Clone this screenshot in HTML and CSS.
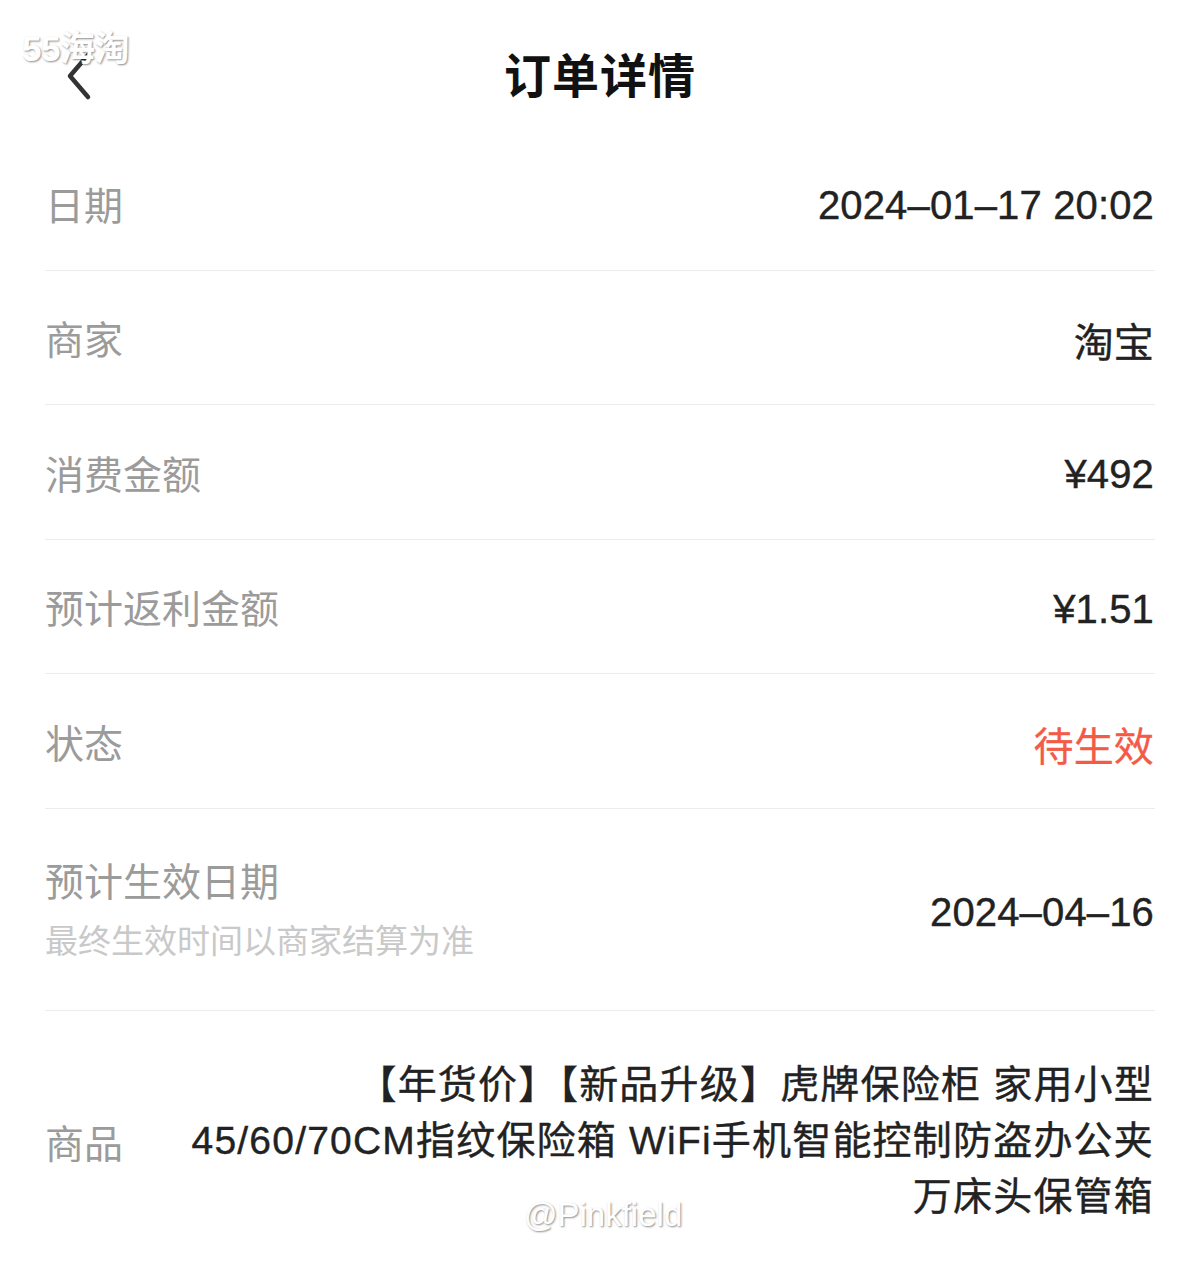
FILE: index.html
```html
<!DOCTYPE html>
<html lang="zh-CN">

<head>
  <meta charset="utf-8">
  <title>订单详情</title>
  <link rel="stylesheet" href="styles.css">
</head>

<body>
  <div class="page">
    <div class="mark-top">55海淘</div>

    <header class="nav">
      <button class="back" aria-label="返回">
        <svg width="30" height="50" viewBox="0 0 30 50">
          <path d="M23 4 L5 25 L23 46" fill="none" stroke="#333" stroke-width="4.5" stroke-linecap="round" stroke-linejoin="round"/>
        </svg>
      </button>
      <h1 class="title">订单详情</h1>
      <span></span>
    </header>

    <div class="list">
      <div class="row">
        <span class="label">日期</span>
        <span class="value">2024–01–17 20:02</span>
      </div>
      <div class="row">
        <span class="label">商家</span>
        <span class="value">淘宝</span>
      </div>
      <div class="row">
        <span class="label">消费金额</span>
        <span class="value">¥492</span>
      </div>
      <div class="row">
        <span class="label">预计返利金额</span>
        <span class="value">¥1.51</span>
      </div>
      <div class="row">
        <span class="label">状态</span>
        <span class="value pending">待生效</span>
      </div>
      <div class="row row-tall">
        <div class="label-group">
          <span class="label">预计生效日期</span>
          <span class="hint">最终生效时间以商家结算为准</span>
        </div>
        <span class="value">2024–04–16</span>
      </div>
      <div class="row row-goods">
        <span class="label">商品</span>
        <span class="value goods">【年货价】【新品升级】虎牌保险柜 家用小型45/60/70CM指纹保险箱 WiFi手机智能控制防盗办公夹万床头保管箱</span>
      </div>
    </div>

    <div class="mark-bottom">@Pinkfield</div>
  </div>
</body>

</html>
```

FILE: styles.css
```css
body {
  margin: 0;
  background: #fff;
  font-family: "Liberation Sans", "Noto Sans CJK SC", sans-serif;
  color: #222;
}

.page {
  position: relative;
  min-height: 1265px;
  overflow: hidden;
}

.nav {
  display: grid;
  grid-template-columns: 1fr auto 1fr;
  align-items: center;
  height: 136px;
  padding: 0 45px;
  box-sizing: border-box;
}

.back {
  justify-self: start;
  background: none;
  border: 0;
  padding: 0;
  margin: 16px 0 0 20px;
  line-height: 0;
}

.title {
  margin: 8px 0 0;
  font-size: 47px;
  font-weight: bold;
  color: #111;
  letter-spacing: 1px;
}

.list {
  padding: 0 45px;
}

.row {
  display: flex;
  align-items: center;
  justify-content: space-between;
  min-height: 133.5px;
  border-bottom: 1px solid #ececec;
}

.label {
  font-size: 39px;
  color: #9b9b9b;
}

.value {
  font-size: 40px;
  color: #222;
  margin: 6px 1px 0 0;
  letter-spacing: 0.15px;
  -webkit-text-stroke: 0.4px #222;
}

.pending {
  color: #f45b47;
  -webkit-text-stroke: 0.3px #f45b47;
}

.row-tall {
  min-height: 201px;
}

.label-group {
  display: flex;
  flex-direction: column;
  gap: 8px;
  margin-top: -4px;
}

.hint {
  font-size: 33px;
  color: #c9c9c9;
}

.row-goods {
  border-bottom: 0;
  padding: 46px 0 30px;
}

.goods {
  width: 985px;
  margin-top: 0;
  font-size: 39px;
  letter-spacing: 1.2px;
  text-align: right;
  line-height: 56px;
}

.mark-top,
.mark-bottom {
  position: absolute;
  color: #fff;
  text-shadow: 1px 1px 2px rgba(0, 0, 0, 0.45);
}

.mark-top {
  left: 22px;
  top: 20px;
  font-size: 35px;
  font-weight: bold;
  letter-spacing: -0.5px;
}

.mark-bottom {
  left: 524px;
  top: 1196px;
  font-size: 33px;
}
```
